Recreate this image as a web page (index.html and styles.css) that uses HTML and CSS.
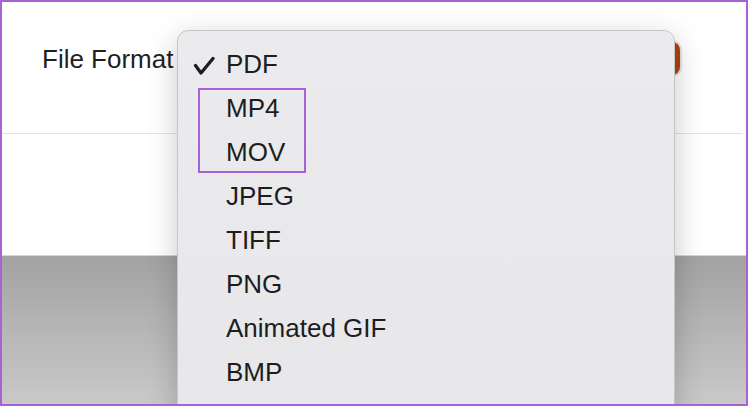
FILE: index.html
```html
<!DOCTYPE html>
<html>
<head>
<meta charset="utf-8">
<link rel="stylesheet" href="styles.css">
</head>
<body>
<div class="frame">
  <div class="panel">
    <div class="row">
      <span class="label">File Format</span>
      <span class="popup"></span>
    </div>
  </div>
  <div class="divider"></div>
  <div class="blank"></div>
  <div class="dark"></div>

  <div class="menu">
    <div class="item">
      <span class="check">
        <svg width="22" height="19" viewBox="0 0 22 19"><path d="M2.5 9.5 L8 17 L20 2.5" fill="none" stroke="#1d1d1f" stroke-width="3.3" stroke-linecap="round" stroke-linejoin="round"/></svg>
      </span>
      <span class="text">PDF</span>
    </div>
    <div class="group">
      <div class="item"><span class="check"></span><span class="text">MP4</span></div>
      <div class="item"><span class="check"></span><span class="text">MOV</span></div>
    </div>
    <div class="item"><span class="check"></span><span class="text">JPEG</span></div>
    <div class="item"><span class="check"></span><span class="text">TIFF</span></div>
    <div class="item"><span class="check"></span><span class="text">PNG</span></div>
    <div class="item"><span class="check"></span><span class="text">Animated GIF</span></div>
    <div class="item"><span class="check"></span><span class="text">BMP</span></div>
  </div>
</div>
</body>
</html>
```

FILE: styles.css
```css
* { box-sizing: border-box; }
html, body { margin: 0; padding: 0; background: #ffffff; }
body { font-family: "Liberation Sans", Arial, sans-serif; color: #1d1d1f; }

.frame {
  position: relative;
  width: 748px;
  height: 406px;
  border: 2px solid #a862d8;
  display: flex;
  flex-direction: column;
  overflow: hidden;
  background: #ffffff;
}

.panel {
  height: 131px;
  padding: 40px 66px 0 40px;
}

.row {
  height: 33px;
  display: flex;
  align-items: center;
  justify-content: space-between;
}

.label {
  font-size: 26px;
  line-height: 33px;
  color: #1f1f1f;
  padding-top: 1px;
}

.popup {
  width: 90px;
  height: 33px;
  border-radius: 8px;
  background: #b3400f;
  box-shadow: 0 0 0 2px #e4e4e4;
}

.divider {
  height: 1px;
  margin-right: 3px;
  background: #e2e2e2;
}

.blank {
  height: 121px;
  background: #ffffff;
}

.dark {
  flex: 1;
  border-top: 1px solid #d6d6d6;
  background: linear-gradient(#a2a2a2, #c9c9c9);
}

.menu {
  position: absolute;
  left: 175px;
  top: 28px;
  width: 498px;
  height: 420px;
  background: linear-gradient(#ebebed, #e7e7e9);
  border: 1px solid #c6c6c8;
  border-radius: 11px;
  padding-top: 11px;
  box-shadow: 0 8px 30px rgba(0, 0, 0, 0.22);
}

.item {
  display: flex;
  align-items: center;
  height: 44px;
}

.check {
  width: 48px;
  flex: none;
  display: flex;
  padding-left: 15px;
  padding-top: 2px;
}

.text {
  font-size: 26px;
  line-height: 44px;
  color: #1d1d1f;
}

.group {
  position: relative;
}

.group::after {
  content: "";
  position: absolute;
  left: 20px;
  top: 2px;
  width: 104px;
  height: 81px;
  border: 2px solid #a862d8;
}
```
